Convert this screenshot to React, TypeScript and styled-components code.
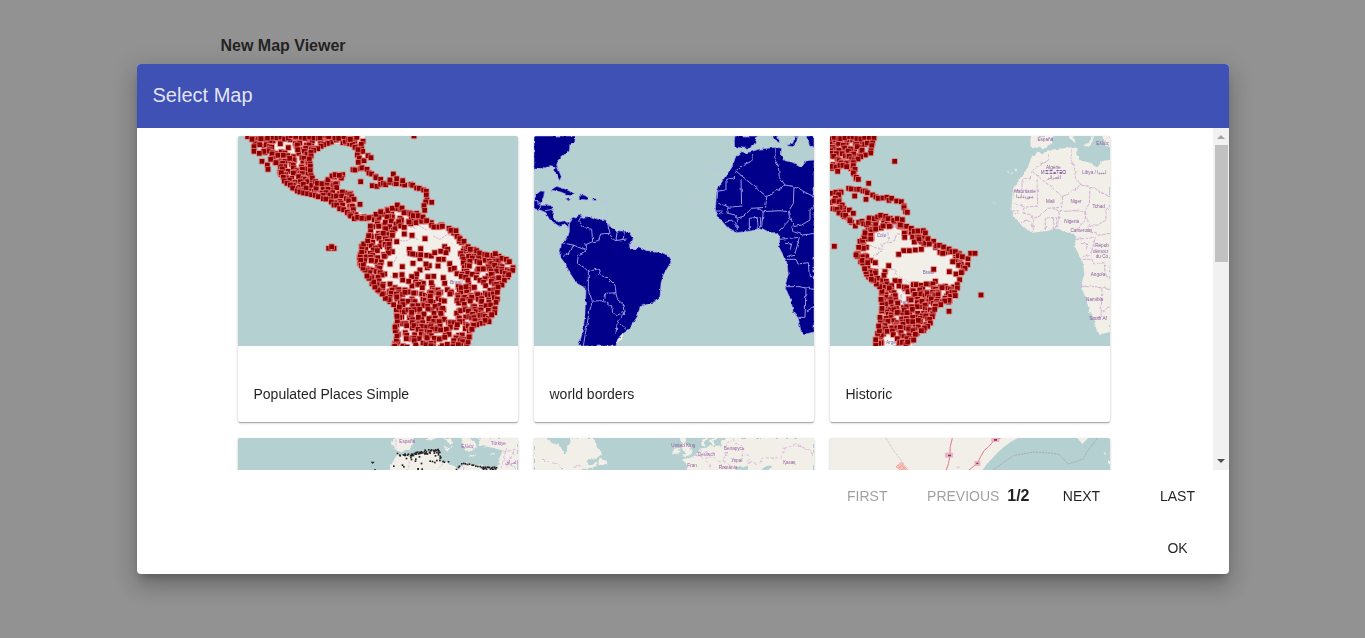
import React from 'react';
import styled, { createGlobalStyle } from 'styled-components';

const GlobalStyle = createGlobalStyle`
  *, *::before, *::after { box-sizing: border-box; }
  html, body, #root { height: 100%; }
  body {
    margin: 0;
    overflow: hidden;
    background: #ffffff;
    color: rgba(0, 0, 0, 0.87);
    font-family: Arial, "Liberation Sans", sans-serif;
    font-size: 14px;
  }
`;

/* ---------- page ---------- */

const Page = styled.main`
  max-width: 940px;
  margin: 0 auto;
  padding: 36px 8px;
`;

const PageTitle = styled.h1`
  margin: 0;
  font-size: 16px;
  line-height: 20px;
  font-weight: 700;
`;

const Backdrop = styled.div`
  position: fixed;
  inset: 0;
  display: flex;
  align-items: center;
  justify-content: center;
  background: rgba(33, 33, 33, 0.49);
`;

const Dialog = styled.section`
  display: flex;
  flex-direction: column;
  width: 80%;
  height: 80%;
  overflow: hidden;
  border-radius: 4px;
  background: #ffffff;
  box-shadow: 0 7px 8px -4px rgba(0, 0, 0, 0.2), 0 13px 19px 2px rgba(0, 0, 0, 0.14),
    0 5px 24px 4px rgba(0, 0, 0, 0.12);
`;

const Toolbar = styled.header`
  display: flex;
  flex: none;
  align-items: center;
  height: 64px;
  padding: 0 16px 2px;
  background: #3f51b5;
  color: rgba(255, 255, 255, 0.87);
`;

const ToolbarTitle = styled.h2`
  margin: 0;
  font-size: 20px;
  line-height: 24px;
  font-weight: 400;
`;

const Body = styled.div`
  display: flex;
  flex: 1;
  min-height: 0;
`;

const Scroller = styled.div`
  flex: 1;
  min-width: 0;
  overflow-y: auto;
  scrollbar-width: none;
`;

const CardGrid = styled.div`
  display: flex;
  flex-wrap: wrap;
  justify-content: center;
  gap: 16px;
  padding: 8px 2px 8px 0;
`;

const Card = styled.figure`
  width: 280px;
  margin: 0;
  border-radius: 2px;
  overflow: hidden;
  background: #ffffff;
  box-shadow: 0 1px 3px 0 rgba(0, 0, 0, 0.2), 0 1px 1px 0 rgba(0, 0, 0, 0.14),
    0 2px 1px -1px rgba(0, 0, 0, 0.12);
`;

const CardCaption = styled.figcaption`
  height: 76px;
  padding: 38px 16px 18px;
  line-height: 20px;
`;

const MapSvg = styled.svg`
  display: block;
  width: 100%;
  aspect-ratio: 4 / 3;
  background: #b5d0d0;
`;

/* ---------- scrollbar ---------- */

const Scrollbar = styled.div`
  display: flex;
  flex: none;
  flex-direction: column;
  width: 16px;
  background: #f1f1f1;
`;

const ScrollArrow = styled.svg`
  flex: none;
  width: 16px;
  height: 17px;
`;

const ScrollTrack = styled.div`
  flex: 1;
  padding: 0 1px 0 2px;
`;

const ScrollThumb = styled.div`
  height: 38%;
  background: #c1c1c1;
`;

/* ---------- actions ---------- */

const Actions = styled.div`
  display: flex;
  flex: none;
  align-items: center;
  justify-content: flex-end;
  height: 52px;
  padding: 0 7px;
`;

const FlatButton = styled.button`
  min-width: 88px;
  height: 36px;
  margin: 0 0 0 8px;
  padding: 0 6px;
  border: 0;
  border-radius: 2px;
  background: transparent;
  color: rgba(0, 0, 0, 0.87);
  font: inherit;
  line-height: 36px;
  text-transform: uppercase;
  cursor: pointer;

  &:disabled {
    color: rgba(0, 0, 0, 0.38);
    cursor: default;
  }
`;

const PageCount = styled.strong`
  font-size: 16px;
  line-height: 20px;
`;

/* ---------- marker generation ---------- */

type Point = [number, number];

const parse = (s: string): Point[] =>
  s.split(' ').map((p) => p.split(',').map(Number) as Point);

const random = (seed: number) => {
  let s = seed * 7919;
  return () => {
    s = (s * 16807) % 2147483647;
    return s / 2147483647;
  };
};

const inside = ([x, y]: Point, poly: Point[]) => {
  let hit = false;
  for (let i = 0, j = poly.length - 1; i < poly.length; j = i++) {
    const [xi, yi] = poly[i];
    const [xj, yj] = poly[j];
    if (yi > y !== yj > y && x < ((xj - xi) * (y - yi)) / (yj - yi) + xi) hit = !hit;
  }
  return hit;
};

/* Jittered grid of points over an area; sparse zones keep only a share of them. */
const fillArea = (area: string, sparse: string[], keep: number, step: number, seed: number) => {
  const poly = parse(area);
  const zones = sparse.map(parse);
  const rnd = random(seed);
  const out: Point[] = [];
  for (let y = 18; y < 655; y += step) {
    for (let x = 12; x < 870; x += step) {
      const p: Point = [
        Math.round(x + (rnd() - 0.5) * step * 1.9),
        Math.round(y + (rnd() - 0.5) * step * 1.9),
      ];
      const chance = rnd();
      if (!inside(p, poly)) continue;
      const limit = zones.some((z) => inside(p, z)) ? keep : 0.95;
      if (chance < limit) out.push(p);
    }
  }
  return out;
};

const alongLine = (line: string, step: number, jitter: number, seed: number) => {
  const pts = parse(line);
  const rnd = random(seed);
  const out: Point[] = [];
  for (let i = 1; i < pts.length; i++) {
    const [ax, ay] = pts[i - 1];
    const [bx, by] = pts[i];
    const n = Math.max(1, Math.round(Math.hypot(bx - ax, by - ay) / step));
    for (let k = 0; k < n; k++) {
      out.push([
        Math.round(ax + ((bx - ax) * k) / n + (rnd() - 0.5) * jitter),
        Math.round(ay + ((by - ay) * k) / n + (rnd() - 0.5) * jitter),
      ]);
    }
  }
  return out;
};

const Markers = ({ points }: { points: Point[] }) => (
  <g>
    {points.map(([x, y], i) => (
      <g key={i}>
        <rect x={x - 10} y={y - 10} width="20" height="20" rx="4" fill="#e87c7c" opacity="0.7" />
        <rect x={x - 7} y={y - 7} width="14" height="14" fill="#8b0000" />
      </g>
    ))}
  </g>
);

const Rough = ({ id, scale }: { id: string; scale: number }) => (
  <filter id={id} x="0" y="0" width="1" height="1" colorInterpolationFilters="sRGB">
    <feTurbulence type="fractalNoise" baseFrequency="0.07" numOctaves="2" seed="4" />
    <feDisplacementMap in="SourceGraphic" scale={scale} xChannelSelector="R" yChannelSelector="G" />
  </filter>
);

const LAND = '#f2efe9';

/* ---------- shared geography: Atlantic view ---------- */

const NORTH_AMERICA = '12,18 137,18 134,36 120,42 118,60 85,90 80,105 94,140 89,152 78,132 72,112 60,110 40,114 12,118';
const CENTRAL_AMERICA = '12,210 20,192 32,183 44,184 40,205 30,226 62,226 70,236 68,258 85,276 104,272 116,282 116,292 104,282 86,288 58,268 48,248 30,240 12,236';
const SOUTH_AMERICA = '118,284 128,264 152,255 158,262 180,259 200,267 228,270 236,286 258,302 294,304 310,326 300,346 326,350 350,362 388,364 416,378 423,396 400,435 393,460 390,500 375,515 330,530 322,560 295,600 272,616 262,630 258,648 145,648 160,600 165,545 168,475 140,460 120,430 105,400 88,378 94,340 112,325 118,305';
const AFRICA = '215,65 230,69 265,58 320,52 335,55 333,75 345,92 370,97 395,110 410,92 432,90 432,605 405,612 392,600 385,565 370,545 362,510 345,470 355,430 350,395 327,352 330,320 320,308 300,308 275,295 245,302 200,308 170,290 145,260 136,240 140,185 150,165 165,140 187,110 195,85';
const EUROPE_PARTS = [
  '195,18 193,34 194,50 215,54 236,55 252,44 257,32 262,18',
  '310,18 322,18 330,38 318,34',
  '352,44 368,40 376,20 384,18 380,34 368,50 354,48',
  '412,18 432,18 432,52 418,44',
];
const AFRICA_BORDERS =
  'M200 125L290 200L345 165L328 140L325 110L314 84L316 55M247 72L245 95L222 103L195 128M195 142L168 150V180L138 184M213 150L215 228L172 232M290 200L287 232L245 235L222 258L200 265L195 255L175 250L170 228L145 220M345 165L372 170L432 200M372 170L370 220L355 245L330 242L280 245L265 235M280 245L275 290M262 262L265 298M272 262V298M238 300V265L262 262M202 305V268M200 290L185 270L165 275M355 245L360 268L330 300M358 245L370 290L395 285L420 270V240L432 225M432 310L400 315L370 305L365 290M330 328L388 322L375 372L350 380M345 340L365 342L360 360M350 388L378 388L384 402L415 398L418 440H432M345 470L388 470L432 478M408 475L405 562L385 562M408 545L432 530M136 243L158 243M140 250L160 252';
const AMERICA_BORDERS =
  'M155 257L145 275L158 292L185 298L188 335L165 345L170 362L130 345L92 338M130 345L120 368L98 380M188 335L205 332L212 312L240 310L232 278M240 315L255 332L290 327M262 303L258 328M283 305L280 326M170 362L145 375L142 400L162 412L175 425L205 416L210 435L235 445L255 465L258 488L228 490L222 512L187 513L175 480L175 425M258 488L262 508L282 525L285 545L262 555L248 548L245 530L222 512M285 545L262 575L258 612M262 575L290 600M187 513L177 550L168 600L160 648M34 226L24 238M70 238L45 242M12 212L26 212L28 226';

/* ---------- map 1: Populated Places Simple ---------- */

const MEXICO = '40,18 70,40 105,70 135,95 158,150 195,178 245,190 290,208 340,240 375,265 410,262 440,275 440,258 395,250 378,240 376,205 360,188 325,182 318,165 335,145 340,130 305,132 290,160 262,162 240,140 238,90 250,60 290,42 365,42 382,60 386,95 400,100 410,80 395,45 405,18';
const SOUTH_NEAR = '440,250 460,236 500,228 520,240 560,248 575,262 600,272 640,285 680,300 692,335 720,353 750,363 800,373 845,398 850,428 812,478 800,533 780,575 730,593 720,628 708,655 485,655 496,600 498,528 465,508 430,478 400,420 385,393 392,348 415,318 425,290';
const SOUTH_NEAR_SPARSE = '505,282 590,280 640,300 680,325 690,360 695,400 690,460 640,490 600,470 560,440 520,470 470,470 462,430 450,400 490,370 480,335';

const populatedNear: Point[] = [
  ...fillArea(MEXICO, ['125,35 185,30 200,60 150,85', '200,100 215,100 210,125 200,120'], 0.2, 11, 17),
  ...alongLine('150,110 165,150 200,182 245,192 290,210 340,240 375,265 410,262 440,275', 12, 8, 61),
  ...alongLine('290,42 250,60 238,90 242,135 262,162 290,160 305,135 338,136', 12, 7, 62),
  ...fillArea(SOUTH_NEAR, [SOUTH_NEAR_SPARSE, '505,580 535,590 525,630 508,640', '645,500 680,505 675,570 650,575', '730,430 770,420 750,470 725,470'], 0.07, 12, 41),
  ...alongLine('440,256 470,240 500,228 540,252 580,258 600,284 640,292 680,306 690,330 720,353 750,366 800,376 842,400 846,425 808,475 798,533 778,572 730,586 715,632', 14, 10, 5),
  ...alongLine('495,645 503,528 465,502 432,472 402,412 392,385 396,348 420,318 428,270', 14, 10, 6),
  ...alongLine('58,22 150,22 250,22 390,24', 13, 12, 2),
  ...alongLine('368,122 400,115 425,132 448,148 462,152', 11, 8, 11),
  ...alongLine('425,165 440,168 470,160 500,162 540,162 580,178 590,195 592,210 584,228 582,250', 12, 8, 12),
  ...alongLine('382,60 388,100 415,78 432,94', 14, 8, 13),
  ...parse('66,28 72,50 72,64 88,70 96,94 112,105 114,118 122,88 138,98 392,155 490,132 605,217 390,223 372,208 552,18 296,355 312,355 305,350 480,150 518,152 500,146'),
  ...parse('523,312 546,316 523,292 480,402 500,335 540,370 556,374 572,356 572,374 548,372 590,376 604,378 614,368 632,364 648,368 640,388 626,388 598,407 588,402 570,420 624,408 640,443 644,460 714,450 708,470 560,432 545,440 516,434 496,436 518,450 536,454 604,458 594,440'),
];

const PopulatedMap = () => (
  <MapSvg viewBox="24 18 840 630" role="img" aria-label="Populated places of Central and South America">
    <polygon points={MEXICO} fill={LAND} />
    <polygon points={SOUTH_NEAR} fill={LAND} />
    <path
      d="M500 280q30 -12 50 -2t40 22M540 290l20 6M500 325q20 14 36 4t30 2M610 318l20 10 20 -14 22 4M480 440l30 8M500 380l-8 18M515 600l4 26"
      fill="none" stroke="#cdb0d8" strokeWidth="3" strokeDasharray="7 3"
    />
    <text x="660" y="463" fontSize="15" fill="#7d609a">Brasil</text>
    <Markers points={populatedNear} />
  </MapSvg>
);

/* ---------- map 2: world borders ---------- */

const BordersMap = () => (
  <MapSvg viewBox="12 18 840 630" role="img" aria-label="World borders around the Atlantic">
    <defs><Rough id="rough-borders" scale={10} /></defs>
    <g filter="url(#rough-borders)">
      <rect x="12" y="18" width="840" height="630" fill="#b5d0d0" />
      <path d="M255 648l4 -30 22 -6 -8 18 -10 10z" fill={LAND} />
      <g fill="#00008b" stroke="#aba6ee" strokeWidth="2" strokeLinejoin="round">
        <polygon points={NORTH_AMERICA} />
        <polygon points={CENTRAL_AMERICA} />
        <polygon points={SOUTH_AMERICA} />
        <polygon points="62,180 80,169 108,178 136,192 120,197 92,186" />
        <polygon points="147,195 162,195 177,204 172,210 148,208" />
        <polygon points="106,206 122,207 116,213" />
        <polygon points="188,205 200,206 198,212 188,211" />
      </g>
      <g transform="translate(420 0)" fill="#00008b" stroke="#aba6ee" strokeWidth="2">
        <polygon points={AFRICA} />
        {EUROPE_PARTS.map((p) => <polygon key={p} points={p} />)}
      </g>
      <path d={AMERICA_BORDERS} fill="none" stroke="#9c98e2" strokeWidth="3" />
      <path d={AFRICA_BORDERS} transform="translate(420 0)" fill="none" stroke="#9c98e2" strokeWidth="3" />
      <path
        d="M98 145l14 6 6 16 20 8 14 10 14 6M215 212l12 4 6 18 0 24 -6 10M12 348l16 4M555 112l14 16 10 -6M496 216l12 6 6 12M700 46l8 -4M12 122L40 112 76 114"
        fill="none" stroke="#c2bdf2" strokeWidth="4" strokeDasharray="6 6"
      />
      <path d="M300 344l10 4 14 2 -8 8 -14 -2z" fill="#b5d0d0" stroke="#c2bdf2" strokeWidth="4" />
    </g>
  </MapSvg>
);

/* ---------- map 3: Historic ---------- */

const AMAZON = '150,305 195,288 232,300 262,335 300,352 340,372 378,380 392,405 388,440 380,480 350,455 320,452 290,462 250,458 215,452 165,448 150,425 140,395 125,382 112,368 128,345 148,335';

const historic: Point[] = [
  ...fillArea(NORTH_AMERICA, [], 1, 10, 9),
  ...alongLine('14,24 80,24 145,24 135,70 118,75 85,98 82,130 98,146 112,144', 12, 8, 4),
  ...alongLine('14,112 40,108 70,110', 12, 6, 14),
  ...fillArea(CENTRAL_AMERICA, [], 1, 12, 3),
  ...alongLine('18,190 42,186 22,210 48,222 30,240 58,258 85,284 110,278 124,292', 12, 9, 7),
  ...alongLine('68,178 100,178 125,190 160,204 200,208 225,213 236,235 236,262', 11, 8, 8),
  ...fillArea(SOUTH_AMERICA, [AMAZON, '205,465 245,480 250,520 220,525', '170,620 215,620 210,648 165,648', '165,530 178,530 172,580 162,580'], 0, 11, 23),
  ...alongLine('118,288 130,268 152,258 200,268 232,272 255,298 290,304 310,322 330,346 356,350 390,368 425,384 424,402 402,432 394,460 388,500 372,512 332,526 322,556 296,598 270,612 258,642', 14, 9, 31),
  ...alongLine('145,642 160,600 166,545 168,480 142,455 118,425 104,392 92,372 98,338 114,322 122,300', 14, 9, 32),
  ...parse('233,362 250,362 268,360 286,358 218,373 323,418 370,425 188,407 177,425 174,436 235,309 236,322 279,327 310,342 350,370 125,398 148,398 380,395'),
  ...parse('206,94 128,160 25,349 369,544 434,370 447,370 86,198 465,495 35,124 120,208 70,240 82,250 244,247 223,285'),
];

const countries: [number, number, string][] = [
  [250, 116, 'Algérie'], [250, 131, 'ⵍⵣⵣⴰⵢⴻⵔ'], [252, 146, 'الجزائر'], [374, 132, 'Libya / ليبيا'],
  [165, 189, 'Mauritanie'], [166, 205, 'موريتانيا'], [241, 218, 'Mali'], [318, 218, 'Niger'],
  [386, 234, 'Tchad'], [305, 278, 'Nigeria'], [334, 306, 'Cameroun'], [396, 352, 'Répub'],
  [392, 368, 'démocr'], [396, 384, 'du Co'], [384, 439, 'Angola'], [374, 514, 'Namibia'],
  [384, 569, 'South Af'], [226, 32, 'España'], [398, 46, 'Ελλάς'],
];

const HistoricMap = () => (
  <MapSvg viewBox="12 18 840 630" role="img" aria-label="Historic places around the Atlantic">
    <defs><Rough id="rough-historic" scale={10} /></defs>
    <g filter="url(#rough-historic)">
      <rect x="12" y="18" width="840" height="630" fill="#b5d0d0" />
      <g fill={LAND}>
        <polygon points={NORTH_AMERICA} />
        <polygon points={CENTRAL_AMERICA} />
        <polygon points={SOUTH_AMERICA} />
      </g>
      <path d={AMERICA_BORDERS} fill="none" stroke="#cdb4d8" strokeWidth="3" strokeDasharray="9 4" />
      <g transform="translate(420 0)">
        <g fill={LAND}>
          <polygon points={AFRICA} />
          {EUROPE_PARTS.map((p) => <polygon key={p} points={p} />)}
        </g>
        <path d={AFRICA_BORDERS} fill="none" stroke="#d3b0d8" strokeWidth="3" strokeDasharray="10 3" />
        <path d="M124 124l6 4M136 130l8 -2M150 116l3 8M82 216l6 4" stroke={LAND} strokeWidth="3" />
      </g>
    </g>
    <g transform="translate(432 0)" fontSize="14" fill="#86599b" textAnchor="middle">
      {countries.map(([x, y, name]) => <text key={name} x={x} y={y}>{name}</text>)}
    </g>
    <g fontSize="14" fill="#7a5da8">
      <text x="290" y="431">Brasil</text>
      <text x="152" y="320">Colo</text>
      <text x="190" y="295">Vene</text>
      <text x="220" y="523">Para</text>
    </g>
    <Markers points={historic} />
    <text x="180" y="642" fontSize="14" fill="#7a5da8">Arge</text>
  </MapSvg>
);

/* ---------- second row ---------- */

const coastDots: Point[] = [
  ...alongLine('505,74 540,76 580,64 628,62 630,90', 4, 9, 51),
  ...alongLine('545,76 580,68 628,64', 4, 8, 52),
  ...alongLine('630,92 660,98', 7, 5, 53),
  ...alongLine('680,116 700,98 760,112 800,113', 6, 4, 54),
  ...alongLine('760,114 800,116', 3, 9, 55),
  ...fillArea('490,85 625,72 620,118 485,118', [], 1, 17, 56),
];

const MediterraneanMap = () => (
  <MapSvg viewBox="24 24 840 630" role="img" aria-label="Mediterranean coast">
    <defs><Rough id="rough-med" scale={12} /></defs>
    <g filter="url(#rough-med)" fill={LAND}>
      <rect x="24" y="24" width="840" height="630" fill="#b5d0d0" />
      <path d="M492 24L483 42 494 60 518 66 540 56 552 40 550 24zM500 76L540 78 580 65 630 62 628 92 655 100 690 117 704 97 740 106 780 112 802 110 816 64 864 56V654H480V110zM590 24L600 32 620 24zM640 24L668 50 660 56 670 36 660 24zM690 24L720 24 740 50 716 66 700 48zM745 24H864V60L822 62 780 52 750 46zM636 50L662 54 654 62zM716 74L740 77 718 80zM780 72L796 68 788 77zM342 46l12 3M366 52h8" />
      <path d="M498 28V60M540 92L530 120M640 95L625 120M830 55L812 118M820 66L860 60M820 90L860 118M850 66L830 110M704 98L700 120" fill="none" stroke="#dfb6df" strokeWidth="3" strokeDasharray="9 4" />
    </g>
    <g fill="#222">
      {coastDots.map(([x, y], i) => <rect key={i} x={x - 2} y={y - 2} width="5" height="5" />)}
      <path d="M422 95h12l-6 7zM432 118h6v4h-6z" />
    </g>
    <g fontSize="14" fill="#9b62ae">
      <text x="508" y="38">España</text>
      <text x="694" y="53">Ελλάς</text>
      <text x="782" y="45">Türkiye</text>
      <text x="826" y="101">العراق</text>
    </g>
  </MapSvg>
);

const NorthAtlanticMap = () => (
  <MapSvg viewBox="22 24 840 630" role="img" aria-label="North Atlantic">
    <defs><Rough id="rough-north" scale={14} /></defs>
    <g filter="url(#rough-north)">
      <rect x="22" y="24" width="840" height="630" fill="#b5d0d0" />
      <g fill={LAND}>
        <path d="M22 24H58L78 40 100 46 112 72 120 72 122 46 132 38 130 24H205L206 46 226 70 208 84 186 90 178 100 196 106 214 96 206 112 170 116 150 140 130 654H22zM218 86L240 92 242 106 218 104zM442 56L458 54 458 70 440 72zM460 24H478L476 40 486 52 496 66 494 76 468 80 476 68 466 56 468 40zM524 44V30L540 24H862V654H500L480 120 484 106 466 88 490 84 508 74 520 58 536 50 550 50z" />
      </g>
      <path d="M540 50L532 40 545 24H556L550 38 562 48 585 46 582 36 600 24H572L560 32 566 44zM628 118L640 106 656 112 664 104 660 120zM704 120L720 104 736 108 722 124z" fill="#b5d0d0" />
      <path d="M46 88L70 98 96 102 106 118M140 112L170 106M505 75L530 85 560 80 575 95 600 90M540 90L555 118M590 50L620 30 632 44 650 52 646 74 666 80 664 96 690 100M600 66L590 90 610 110M700 100L706 82 740 86 766 80 770 56 808 42 836 56 862 76M580 100L600 118M520 60L545 70" fill="none" stroke="#dab8dc" strokeWidth="3" strokeDasharray="10 5" />
    </g>
    <g fontSize="14" fill="#965c9e">
      <text x="434" y="50">United King</text>
      <text x="514" y="78">Deutsch</text>
      <text x="592" y="60">Беларусь</text>
      <text x="614" y="96">Украї</text>
      <text x="482" y="110">Fran</text>
      <text x="576" y="117">România</text>
      <text x="770" y="101">Қазақ</text>
    </g>
  </MapSvg>
);

const BayMap = () => (
  <MapSvg viewBox="28 24 840 630" role="img" aria-label="Bay with roads">
    <rect x="28" y="24" width="840" height="630" fill={LAND} />
    <path d="M480 130Q494 104 516 84Q552 42 592 24H770L785 42 802 24H870V654H440z" fill="#b5d0d0" />
    <path d="M848 66l8 4-2 6zM862 90l8 6-2 8-6-6z" fill={LAND} />
    <path d="M510 126L548 98 580 76 640 66 700 70 716 74 742 102 786 88 800 64 830 24" fill="none" stroke="#a093bd" strokeWidth="2" strokeDasharray="6 3" />
    <path d="M195 24L222 66 252 104" fill="none" stroke="#bcb8b8" strokeWidth="2" strokeDasharray="8 3" />
    <path d="M395 24Q386 50 388 76Q386 100 374 128M540 24L520 32 504 50 490 62 480 80 470 100 440 124" fill="none" stroke="#e5798f" strokeWidth="3" />
    <g fill="#e6a7b9" opacity="0.8">
      <rect x="373" y="68" width="24" height="15" />
      <rect x="512" y="24" width="24" height="12" />
      <rect x="461" y="93" width="18" height="15" />
      <rect x="408" y="109" width="9" height="6" fill="#dfc8df" />
    </g>
    <path d="M382 74h9v5h-9zM520 27h9v5h-9zM467 98h6v4h-6z" fill="#8a3558" />
    <path d="M226 110L242 97 262 120 250 128z" fill="#f6cfc8" stroke="#ef8f83" strokeWidth="2" />
    <path d="M232 105L250 126M238 101L257 122M232 116L248 103M238 124L256 111" stroke="#ef8f83" strokeWidth="2" />
  </MapSvg>
);

const maps = [
  { Preview: PopulatedMap, name: 'Populated Places Simple' },
  { Preview: BordersMap, name: 'world borders' },
  { Preview: HistoricMap, name: 'Historic' },
  { Preview: MediterraneanMap, name: '' },
  { Preview: NorthAtlanticMap, name: '' },
  { Preview: BayMap, name: '' },
];

export default function App() {
  return (
    <>
      <GlobalStyle />
      <Page>
        <PageTitle>New Map Viewer</PageTitle>
      </Page>
      <Backdrop>
        <Dialog role="dialog" aria-modal="true" aria-labelledby="dialog-title">
          <Toolbar>
            <ToolbarTitle id="dialog-title">Select Map</ToolbarTitle>
          </Toolbar>
          <Body>
            <Scroller>
              <CardGrid>
                {maps.map(({ Preview, name }, i) => (
                  <Card key={i}>
                    <Preview />
                    <CardCaption>{name}</CardCaption>
                  </Card>
                ))}
              </CardGrid>
            </Scroller>
            <Scrollbar aria-hidden="true">
              <ScrollArrow viewBox="0 0 16 17"><path d="M4 11l4-4 4 4z" fill="#a3a3a3" /></ScrollArrow>
              <ScrollTrack><ScrollThumb /></ScrollTrack>
              <ScrollArrow viewBox="0 0 16 17"><path d="M4 6h8l-4 4z" fill="#505050" /></ScrollArrow>
            </Scrollbar>
          </Body>
          <Actions>
            <FlatButton type="button" disabled>First</FlatButton>
            <FlatButton type="button" disabled>Previous</FlatButton>
            <PageCount>1/2</PageCount>
            <FlatButton type="button">Next</FlatButton>
            <FlatButton type="button">Last</FlatButton>
          </Actions>
          <Actions>
            <FlatButton type="button">OK</FlatButton>
          </Actions>
        </Dialog>
      </Backdrop>
    </>
  );
}
